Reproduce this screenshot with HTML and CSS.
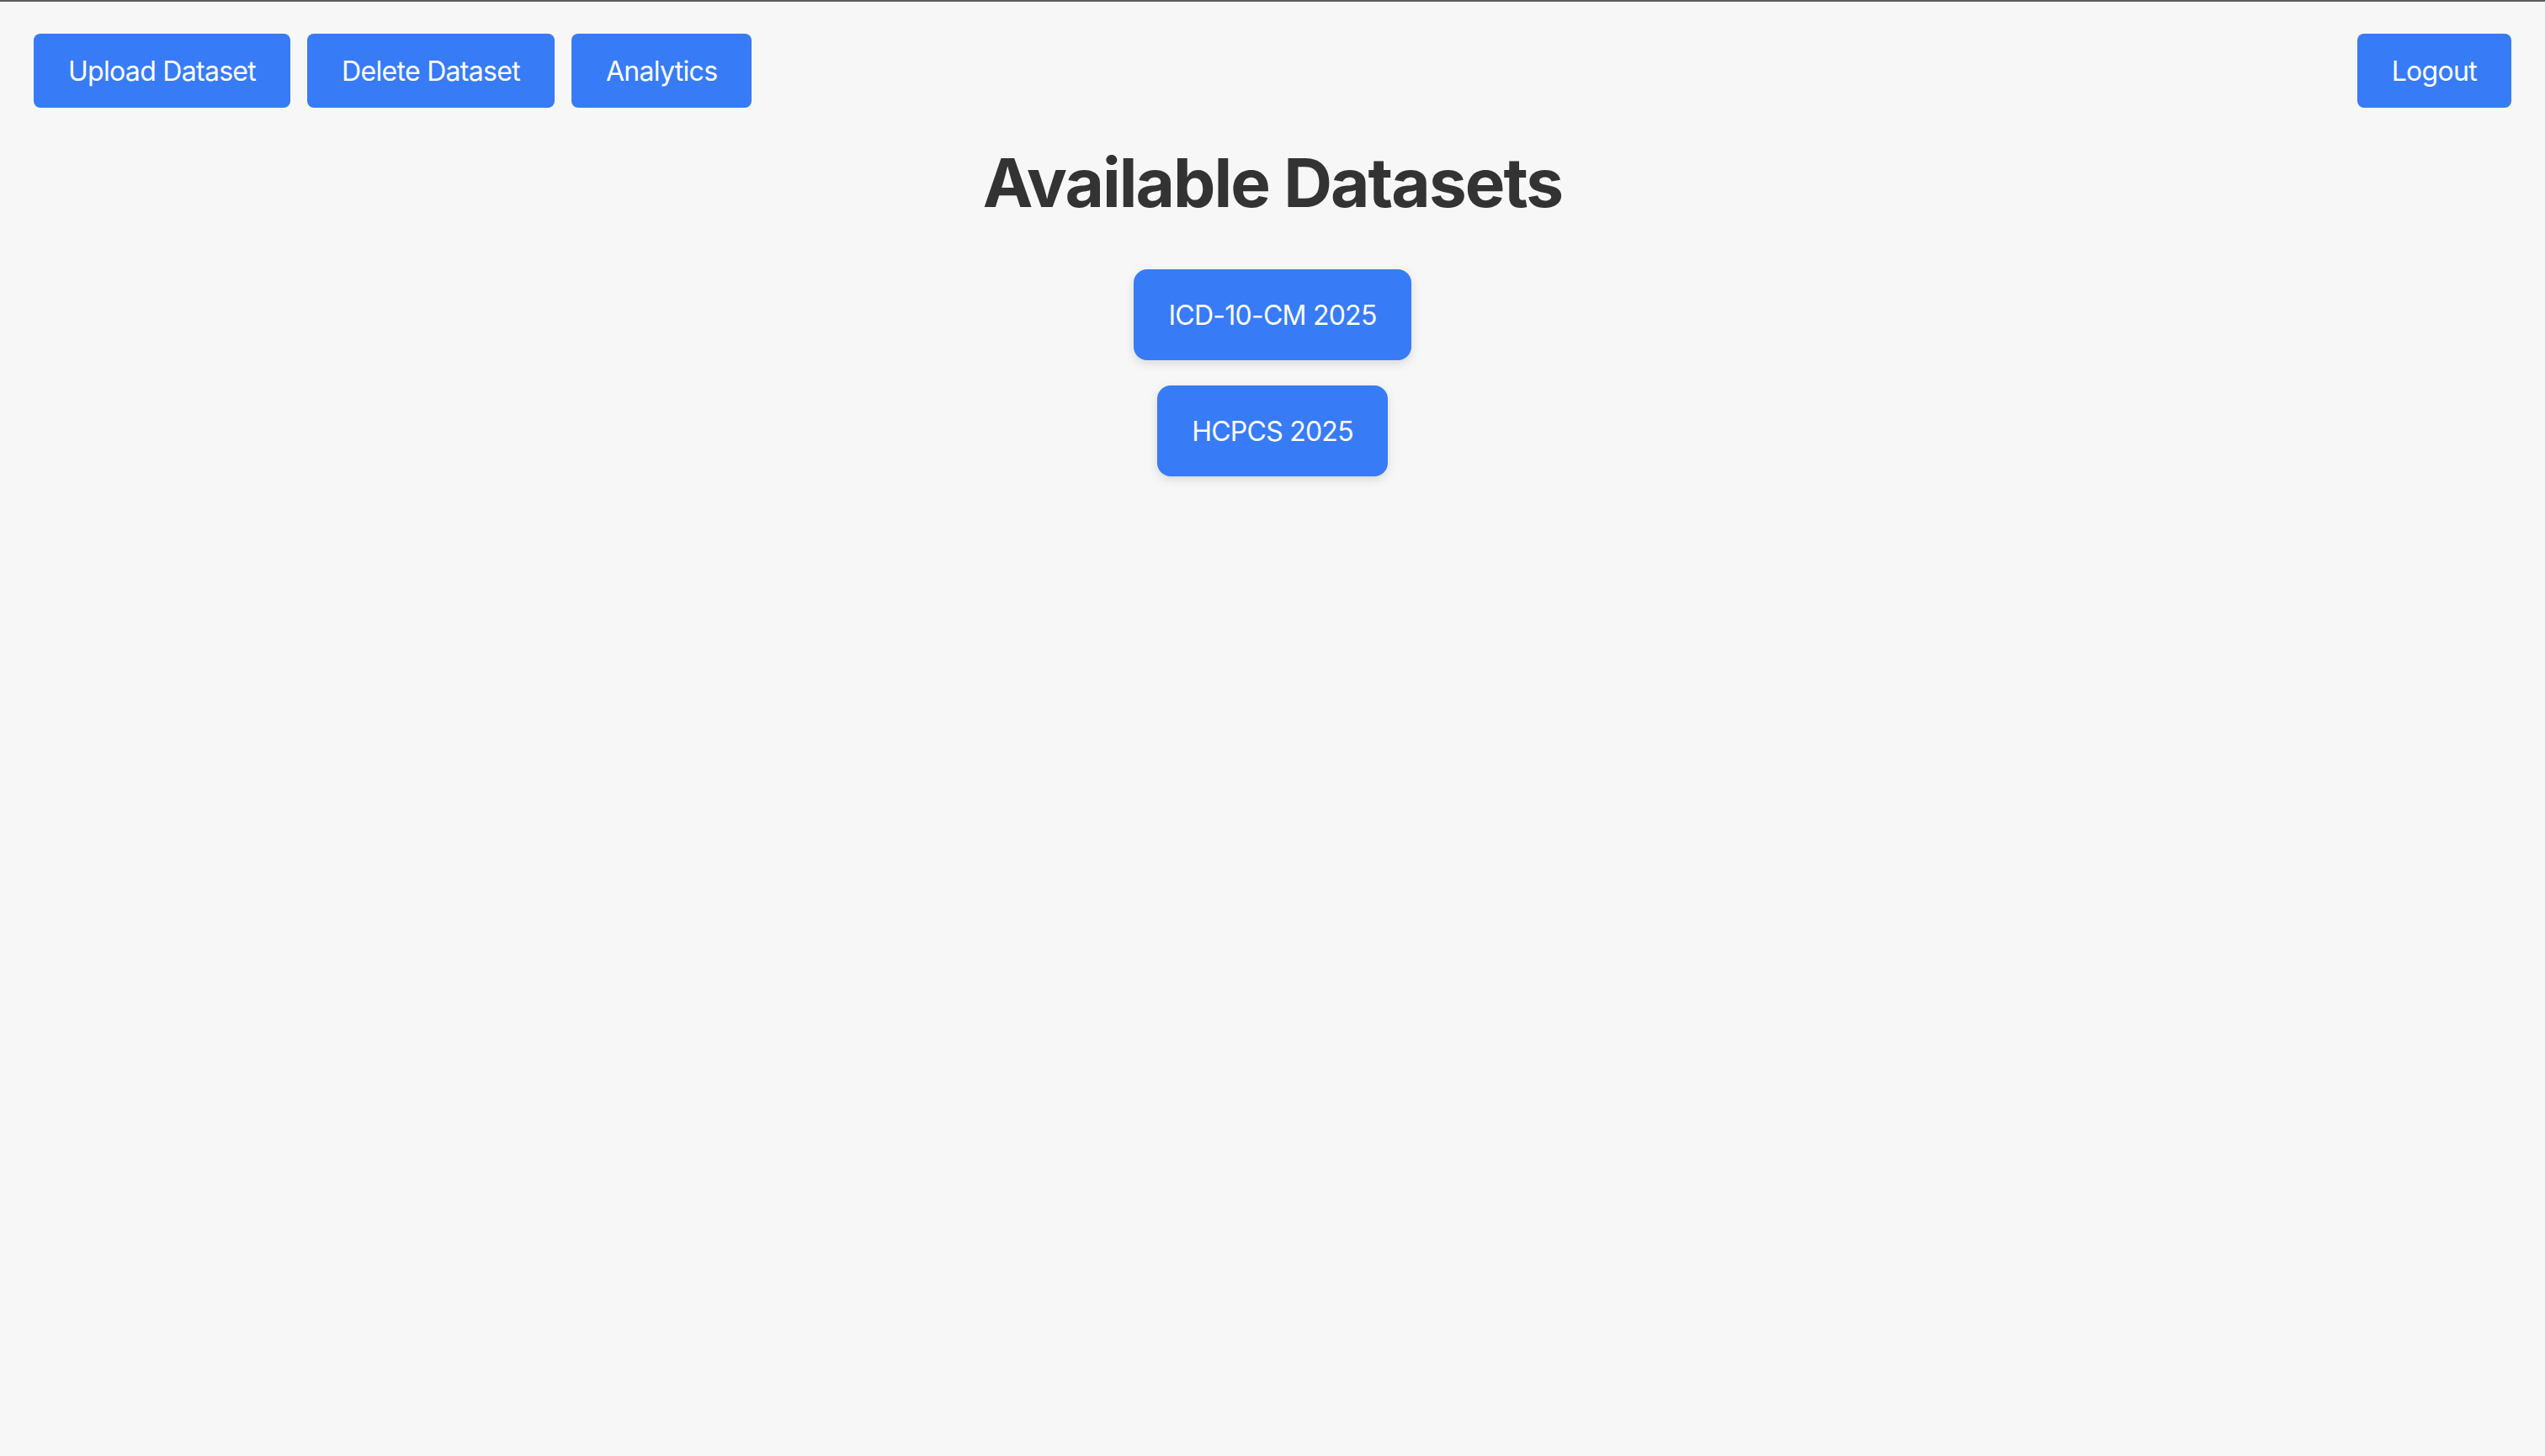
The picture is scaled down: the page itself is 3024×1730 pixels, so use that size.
FILE: index.html
```html
<!DOCTYPE html>
<html lang="en">
<head>
<meta charset="utf-8">
<title>Available Datasets</title>
<link rel="stylesheet" href="styles.css">
</head>
<body>
<header class="topbar">
  <nav class="actions">
    <button class="btn">Upload Dataset</button>
    <button class="btn">Delete Dataset</button>
    <button class="btn">Analytics</button>
  </nav>
  <button class="btn">Logout</button>
</header>
<main class="content">
  <h1 class="title">Available Datasets</h1>
  <div class="datasets">
    <button class="dataset">ICD-10-CM 2025</button>
    <button class="dataset">HCPCS 2025</button>
  </div>
</main>
</body>
</html>
```

FILE: styles.css
```css
html, body {
  margin: 0;
  padding: 0;
}
body {
  background: #f7f7f7;
  font-family: Inter, "Noto Sans", "Liberation Sans", sans-serif;
  color: #333333;
  border-top: 2px solid #5c5c5c;
  min-height: 1728px;
}
.topbar {
  display: flex;
  justify-content: space-between;
  align-items: flex-start;
  padding: 38px 40px 0 40px;
}
.actions {
  display: flex;
  gap: 20px;
}
.btn {
  background: #387bf6;
  color: #ffffff;
  border: none;
  border-radius: 8px;
  font-family: Inter, "Noto Sans", "Liberation Sans", sans-serif;
  font-size: 32px;
  letter-spacing: -0.7px;
  line-height: 40px;
  padding: 25px 41px 23px 41px;
  cursor: pointer;
}
.content {
  display: flex;
  flex-direction: column;
  align-items: center;
}
.title {
  font-size: 80px;
  font-weight: 700;
  letter-spacing: -1.9px;
  color: #333333;
  margin: 40px 0 55px 0;
  line-height: normal;
}
.datasets {
  display: flex;
  flex-direction: column;
  align-items: center;
  gap: 30px;
}
.dataset {
  background: #387bf6;
  color: #ffffff;
  border: none;
  border-radius: 16px;
  font-family: Inter, "Noto Sans", "Liberation Sans", sans-serif;
  font-size: 32px;
  letter-spacing: -0.75px;
  line-height: 40px;
  padding: 35px 41px 33px 41px;
  box-shadow: 0 4px 12px rgba(0, 0, 0, 0.12);
  cursor: pointer;
}
```
